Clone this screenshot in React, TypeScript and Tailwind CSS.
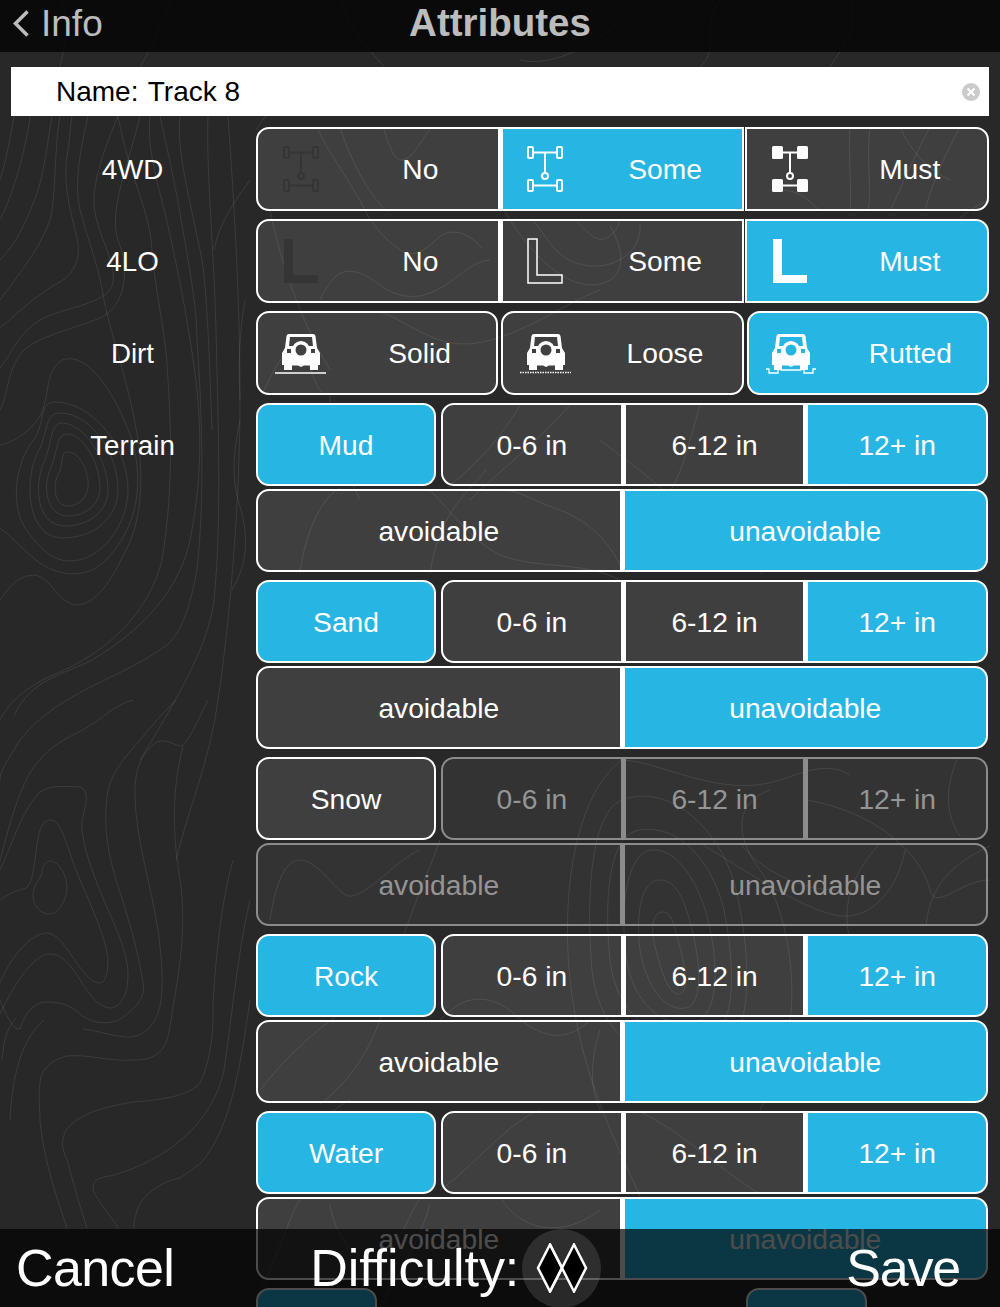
import { ReactNode } from 'react';

const contours = [
  // peak beside the Terrain label
  'M67 452C60 452 64 465 58 475C52 487 55 506 68 506C80 506 90 495 88 480C86 465 78 452 67 452Z',
  'M67 434C56 434 58 452 50 470C42 490 48 516 68 516C86 516 100 504 100 488C100 464 84 434 67 434Z',
  'M62 423C50 423 52 445 44 462C34 484 36 526 65 526C90 526 108 510 108 490C108 460 84 423 62 423Z',
  'M60 413C44 413 48 435 38 452C24 478 26 538 62 538C96 538 118 516 118 490C118 452 90 413 60 413Z',
  'M55 402C38 402 46 425 32 442C14 466 10 510 28 532C40 548 52 561 70 561C102 561 128 524 128 490C128 446 92 402 55 402Z',
  'M0 445C14 442 30 432 40 416C50 398 44 372 62 360C90 350 118 400 132 440C146 490 134 530 106 560C84 582 52 576 30 555C16 542 8 534 0 528',
  'M0 600C8 590 14 577 32 575C50 574 56 602 76 605C100 605 116 570 128 546C140 520 144 486 138 440C130 386 112 340 104 300C100 270 88 240 80 210C74 185 80 150 88 116',
  'M0 368C14 350 20 330 44 318C70 306 104 304 112 286C120 262 92 232 94 196C96 170 108 140 118 116',
  'M0 328C20 312 34 296 60 282C76 272 82 256 76 234C70 210 62 180 68 150C70 138 70 126 72 116',
  'M0 260C20 240 30 212 38 190C44 172 48 140 52 116',
  'M0 220C10 200 20 170 26 140C28 130 30 122 30 116',
  'M0 180C6 160 10 140 14 116M0 300C14 280 40 250 50 220C56 200 54 150 60 116',
  'M0 410C10 390 6 370 24 350C40 336 70 330 100 318C126 306 130 270 118 240C108 210 130 160 140 116',
  'M150 116C146 150 160 190 168 226C176 262 184 300 190 340C202 410 204 470 190 540C180 590 140 632 92 660C60 676 30 680 14 716',
  'M182 225C190 270 197 310 197 340C202 410 205 500 197 569C190 610 180 634 167 645C120 680 60 690 20 740C8 760 0 770 0 780',
  'M160 116C172 170 178 200 182 225M118 116C130 180 150 210 152 250C156 300 166 330 168 380C172 440 172 500 162 560C150 610 110 650 60 672C30 684 10 700 0 720',
  'M208 116C206 170 214 250 216 330C218 420 222 520 214 600C208 650 170 710 140 760',
  'M228 116C234 200 240 300 240 400C240 500 230 620 218 700C210 760 188 810 176 860',
  'M240 420C236 440 230 470 238 500C248 530 250 560 232 590M245 300C240 330 238 360 240 400',
  'M180 116C176 150 190 200 202 260C208 300 210 380 212 430M250 180C236 200 220 220 214 250',
  // lower left ridges
  'M50 861C60 861 67 878 67 887C67 900 58 914 50 914C40 914 33 905 33 895C33 884 42 878 42 872C42 866 46 861 50 861Z',
  'M0 900C10 892 20 890 26 888C36 880 34 850 40 830C44 820 48 820 52 820C62 822 68 850 76 870C86 896 104 930 108 958C108 976 104 983 100 983C90 983 84 972 76 962C66 948 58 933 46 933C30 934 10 958 0 983',
  'M0 870C14 840 22 810 40 792C52 784 70 787 80 787C90 790 86 806 82 820C80 840 92 870 100 891C112 920 128 950 128 975C128 996 120 1008 110 1008C96 1006 92 996 84 986C74 970 64 954 50 954C34 954 14 984 0 1014',
  'M0 861C10 820 20 790 30 773C40 756 56 744 67 738C84 730 100 720 110 711C118 706 126 702 133 700',
  'M0 1000C8 1020 14 1030 20 1029C26 1010 36 1002 47 1002C62 1002 70 1006 78 1012C90 1024 110 1026 122 1018C138 1006 146 996 143 982C138 950 126 910 116 880C106 846 104 822 107 796C110 774 124 758 140 740C148 730 160 716 176 700',
  'M135 796C134 770 142 752 157 742C166 738 176 746 180 746C188 744 196 724 208 700M135 796C136 840 150 880 158 930C162 960 164 986 160 1006C154 1030 140 1038 126 1037C110 1036 96 1030 83 1029',
  'M183 746C172 790 172 830 180 880C188 930 176 990 173 1006C170 1030 168 1040 163 1048C156 1058 146 1060 133 1060C110 1062 90 1054 67 1056C50 1060 40 1072 40 1083C38 1096 40 1110 40 1121C44 1160 56 1196 67 1228',
  'M213 1006C214 1040 208 1066 200 1083C190 1096 160 1100 133 1102C110 1106 80 1112 67 1129C60 1140 62 1150 67 1159C72 1180 80 1206 87 1228',
  'M233 860C222 900 216 950 213 1006M250 900C236 960 232 1020 224 1070C214 1120 170 1160 110 1176C92 1178 90 1186 96 1196C106 1212 114 1220 118 1228',
  'M250 1000C240 1070 230 1130 200 1164C186 1174 180 1178 180 1178C160 1182 140 1196 136 1214C134 1220 134 1224 134 1228',
  'M10 1120C12 1080 20 1040 44 1020M2 1060C4 1040 6 1030 16 1018',
  // through the top controls
  'M256 130C270 110 276 96 300 86M270 210C280 260 300 320 330 370',
  'M317 127C326 150 350 180 366 212C372 225 386 240 400 250C412 258 424 252 438 238C452 226 470 234 482 248',
  'M383 127C388 140 392 158 400 160C412 162 420 140 430 130M340 127C350 160 372 200 388 212',
  'M320 300C330 280 338 268 356 272C376 276 386 300 420 296C450 290 466 262 490 260',
  'M330 396C330 420 345 470 360 500M262 395C278 360 286 348 296 350C310 352 312 384 322 392',
  'M372 311C392 312 410 330 440 340C470 350 500 340 540 320C566 306 584 296 600 290',
  'M505 212C522 240 560 292 600 284C620 280 630 260 610 226',
  'M532 219C550 240 556 262 590 266C618 268 642 250 640 224',
  'M575 219C590 236 600 246 612 234C620 226 620 222 618 219',
  'M470 500C500 470 540 440 570 405',
  'M256 450C274 470 300 450 316 480M448 487C470 470 500 440 520 405',
  'M300 573C304 540 318 500 340 488M430 573C440 510 470 490 486 470',
  'M430 490C450 510 470 540 500 555C540 570 580 560 620 580',
  'M500 490C520 490 530 500 560 510C586 520 610 540 622 570',
  'M600 440C640 470 680 500 700 530M810 487C790 540 770 560 760 574',
  'M700 405C690 440 680 480 670 490M870 404C860 440 850 470 846 487',
  'M850 127C848 150 852 190 850 211M870 127C866 160 872 190 868 211M900 127C910 150 928 170 950 180M930 127C910 165 900 190 890 211M960 127C940 165 930 190 925 211',
  'M990 200C960 210 940 240 930 260M780 190C800 190 808 200 820 211',
  // centre right contour peak
  'M663 912C652 912 650 930 656 950C662 975 670 996 680 994C690 992 684 960 678 940C674 925 672 912 663 912Z',
  'M660 880C640 880 636 916 640 950C646 985 664 1012 686 1008C704 1004 700 960 692 930C686 905 678 880 660 880Z',
  'M652 850C626 852 620 910 626 956C632 1000 660 1030 696 1022C720 1014 718 960 708 920C698 880 676 848 652 850Z',
  'M640 830C608 834 604 900 610 960C616 1016 660 1050 710 1036C738 1026 734 960 724 910C712 862 680 824 640 830Z',
  'M622 800C590 812 586 900 592 970C600 1040 650 1076 720 1050C756 1034 750 950 736 890C722 830 670 782 622 800',
  'M622 760C580 790 560 880 570 980C580 1070 610 1130 640 1196',
  'M770 790C740 800 730 830 760 870C788 910 796 980 790 1020C786 1060 770 1090 760 1110',
  'M806 800C870 810 920 850 930 890C936 912 960 880 990 880',
  'M700 843C760 880 820 920 850 916C880 912 900 880 905 850',
  'M880 843C856 870 840 900 850 940M740 843C760 870 800 890 836 890',
  'M958 757C948 780 942 810 960 836M990 846C960 860 930 880 926 926',
  'M620 760C660 760 720 800 780 780C800 774 826 760 850 775',
  'M868 1020C846 1030 820 1060 800 1100M600 1030C590 1060 590 1090 600 1110',
  'M440 840C430 870 400 930 380 1020C366 1060 340 1090 320 1104',
  'M270 920C276 880 286 860 300 860C320 860 340 900 352 896C372 892 396 860 420 850',
  'M260 1090C300 1040 340 1010 380 990M440 1020C460 1000 480 990 510 1010C530 1030 560 1050 590 1020',
  'M260 1180C300 1140 330 1110 350 1100M440 1190C470 1170 510 1120 540 1110M640 1112C680 1130 720 1170 760 1194',
  'M330 1205C334 1230 350 1260 376 1260C396 1258 410 1210 420 1199M430 1205C420 1240 396 1280 380 1307',
  'M262 1288C280 1250 292 1210 300 1200M500 1197C520 1230 560 1240 600 1210',
];

const blue = 'bg-[#27b5e3]';

const Topo = () => (
  <svg className="absolute inset-0 h-full w-full" viewBox="0 0 1000 1307" fill="none" stroke="#ffffff" strokeOpacity="0.09" strokeWidth="1">
    {contours.map((d, i) => (
      <path key={i} d={d} />
    ))}
    <path d="M60 0C70 20 66 40 60 67M170 0C160 30 150 50 140 67M340 0C350 30 370 50 384 67M640 0C620 30 560 70 520 60M720 0C700 30 720 50 700 67M850 0C860 30 840 50 830 67" />
  </svg>
);

const DriveIcon = ({ color, filled }: { color: string; filled?: boolean }) => (
  <svg width="36" height="46" viewBox="0 0 36 46" fill="none" stroke={color}>
    {filled ? (
      <g fill={color} stroke="none">
        <rect x="0" y="0" width="11" height="13" rx="1.5" />
        <rect x="25" y="0" width="11" height="13" rx="1.5" />
        <rect x="0" y="33" width="11" height="13" rx="1.5" />
        <rect x="25" y="33" width="11" height="13" rx="1.5" />
      </g>
    ) : (
      <g strokeWidth="2">
        <rect x="1" y="1" width="5" height="11" rx="1" />
        <rect x="30" y="1" width="5" height="11" rx="1" />
        <rect x="1" y="34" width="5" height="11" rx="1" />
        <rect x="30" y="34" width="5" height="11" rx="1" />
      </g>
    )}
    <path d="M6 6.500H30M6 39.500H30M18 6.500V27" strokeWidth="2" />
    <circle cx="18" cy="30" r="3" strokeWidth="2" />
  </svg>
);

const LowIcon = ({ color, filled }: { color: string; filled?: boolean }) => (
  <svg width="36" height="46" viewBox="0 0 36 46">
    <path
      d="M1 1H10V37H35V45H1Z"
      fill={filled ? color : 'none'}
      stroke={filled ? 'none' : color}
      strokeWidth="1.5"
    />
  </svg>
);

const JeepIcon = ({ ground, bg }: { ground: 'solid' | 'dots' | 'ruts'; bg: string }) => (
  <svg className="mt-[4px]" width="52" height="42" viewBox="-7 0 52 42">
    <path
      d="M7 0H31Q33 0 33.500 2L35 14L38 19V31H36V36H28V31.500H22L19 33L16 31.500H10V36H2V31H0V19L3 14L4.500 2Q5 0 7 0Z"
      fill="#fff"
    />
    <path d="M8 3H30L31 12H7Z" fill={bg} />
    <circle cx="19" cy="16" r="9" fill="#fff" />
    <circle cx="19" cy="16" r="5.500" fill={bg} />
    <rect x="5" y="15" width="4" height="4" fill={bg} />
    <rect x="29" y="15" width="4" height="4" fill={bg} />
    {ground === 'solid' && <path d="M-7 39H44" stroke="#fff" strokeWidth="1.500" />}
    {ground === 'dots' && <path d="M-7 38.500H44" stroke="#fff" strokeWidth="1.500" strokeDasharray="1.500 1" />}
    {ground === 'ruts' && (
      <path d="M-6 35H-3V39H6V35H8L9 36H29L30 35H32V39H41V35H44" fill="none" stroke="#fff" strokeWidth="1.300" />
    )}
  </svg>
);

type Tone = 'off' | 'on' | 'dim';

const tones: Record<Tone, string> = {
  off: 'border-white bg-white/[.11] text-white',
  on: 'border-white bg-[#27b5e3] text-white',
  dim: 'border-[#8c8c8c] bg-white/[.055] text-[#959595]',
};

interface SegProps {
  tone?: Tone;
  className?: string;
  icon?: ReactNode;
  children: ReactNode;
}

const Seg = ({ tone = 'off', className = '', icon, children }: SegProps) => (
  <div className={`flex min-w-0 flex-1 items-center border-2 ${tones[tone]} ${className}`}>
    {icon && <div className="flex w-[85px] shrink-0 justify-center">{icon}</div>}
    <span className="flex-1 pt-px text-center">{children}</span>
  </div>
);

const DepthRow = ({ name, nameOn, dim }: { name: string; nameOn: boolean; dim?: boolean }) => {
  const rest: Tone = dim ? 'dim' : 'off';
  return (
    <div className="flex flex-col gap-[3px]">
      <div className="flex h-[83px] w-[732px] gap-[5px]">
        <Seg tone={nameOn ? 'on' : 'off'} className="max-w-[180px] rounded-[13px]">{name}</Seg>
        <div className="flex flex-1">
          <Seg tone={rest} className="rounded-l-[13px]">0-6 in</Seg>
          <Seg tone={rest} className="border-l-[3px]">6-12 in</Seg>
          <Seg tone={dim ? 'dim' : 'on'} className="rounded-r-[13px] border-l-[3px]">12+ in</Seg>
        </div>
      </div>
      <div className="flex h-[83px] w-[732px]">
        <Seg tone={rest} className="rounded-l-[13px]">avoidable</Seg>
        <Seg tone={dim ? 'dim' : 'on'} className="rounded-r-[13px] border-l-[3px]">unavoidable</Seg>
      </div>
    </div>
  );
};

const Label = ({ children }: { children: ReactNode }) => (
  <div className="mr-[2px] flex h-[84px] w-[243px] shrink-0 items-center justify-center pt-px text-[27.7px] text-white">{children}</div>
);

const Row = ({ label, children }: { label: string; children: ReactNode }) => (
  <div className="flex h-[84px]">
    <Label>{label}</Label>
    <div className="flex-1">{children}</div>
  </div>
);

export default function App() {
  return (
    <div className="relative h-[1307px] w-[1000px] overflow-hidden bg-[#282828] font-['Liberation_Sans',sans-serif] text-[28.2px]">
      <Topo />

      <header className="relative grid h-[52px] grid-cols-[1fr_auto_1fr] items-center bg-black/75 pb-[6px] leading-none text-[#bcbcbc]">
        <div className="flex items-center pl-[13px] text-[37px]">
          <svg width="16" height="27" viewBox="0 0 16 27" fill="none" stroke="#bcbcbc" strokeWidth="3.500">
            <path d="M14.500 1.500L2.500 13.500L14.500 25.500" />
          </svg>
          <span className="ml-[12px]">Info</span>
        </div>
        <h1 className="text-[38.500px] font-bold">Attributes</h1>
        <div />
      </header>

      <main className="relative pl-[11px] pr-[11px] pt-[15px]">
        <div className="flex h-[49px] items-center bg-white pl-[45px] pr-[9px] text-[28px] text-black">
          <span className="flex-1">
            <span className="mr-[2px]">Name:</span> Track 8
          </span>
          <svg width="18" height="18" viewBox="0 0 18 18">
            <circle cx="9" cy="9" r="9" fill="#cbcbcb" />
            <path d="M5.500 5.500L12.500 12.500M12.500 5.500L5.500 12.500" stroke="#fff" strokeWidth="2" />
          </svg>
        </div>

        <div className="mt-[11px] flex flex-col gap-[8px]">
          <Row label="4WD">
            <div className="flex h-[84px] w-[733px]">
              <Seg className="rounded-l-[13px]" icon={<DriveIcon color="#353535" />}>No</Seg>
              <Seg tone="on" className="border-l-[3px]" icon={<DriveIcon color="#fff" />}>Some</Seg>
              <Seg className="ml-px rounded-r-[13px]" icon={<DriveIcon color="#fff" filled />}>Must</Seg>
            </div>
          </Row>
          <Row label="4LO">
            <div className="flex h-[84px] w-[733px]">
              <Seg className="rounded-l-[13px]" icon={<LowIcon color="#353535" filled />}>No</Seg>
              <Seg className="border-l-[3px]" icon={<LowIcon color="#fff" />}>Some</Seg>
              <Seg tone="on" className="ml-px rounded-r-[13px]" icon={<LowIcon color="#fff" filled />}>Must</Seg>
            </div>
          </Row>
          <Row label="Dirt">
            <div className="flex h-[84px] w-[733px] gap-[3px]">
              <Seg className="rounded-[13px]" icon={<JeepIcon ground="solid" bg="#404040" />}>Solid</Seg>
              <Seg className="rounded-[13px]" icon={<JeepIcon ground="dots" bg="#404040" />}>Loose</Seg>
              <Seg tone="on" className="rounded-[13px]" icon={<JeepIcon ground="ruts" bg="#27b5e3" />}>Rutted</Seg>
            </div>
          </Row>
          <div className="flex">
            <Label>Terrain</Label>
            <div className="flex flex-col gap-[8px]">
              <DepthRow name="Mud" nameOn />
              <DepthRow name="Sand" nameOn />
              <DepthRow name="Snow" nameOn={false} dim />
              <DepthRow name="Rock" nameOn />
              <DepthRow name="Water" nameOn />
              <div className="flex h-[83px] w-[732px]">
                <div className={`h-full w-[121px] rounded-[13px] border-2 border-white ${blue}`} />
                <div className={`ml-[369px] h-full w-[121px] rounded-[13px] border-2 border-white ${blue}`} />
              </div>
            </div>
          </div>
        </div>
      </main>

      <footer className="absolute inset-x-0 bottom-0 flex h-[78px] items-center overflow-hidden bg-black/70 pl-[16px] pr-[40px] text-[52px] text-white">
        <span className="tracking-[-0.6px]">Cancel</span>
        <span className="ml-[136px] tracking-[-0.1px]">Difficulty:</span>
        <div className="ml-[3px] flex h-[79px] w-[79px] shrink-0 items-center justify-center rounded-full bg-white/[.12]">
          <svg width="52" height="50" viewBox="0 0 52 50" fill="#000" stroke="#fff" strokeWidth="2.500">
            <path d="M14 1.500L26 25L14 48.500L2 25Z" />
            <path d="M38 1.500L50 25L38 48.500L26 25Z" />
            <path d="M14 1.500L26 25L14 48.500" fill="none" />
          </svg>
        </div>
        <span className="ml-auto tracking-[-1.2px]">Save</span>
      </footer>
    </div>
  );
}
